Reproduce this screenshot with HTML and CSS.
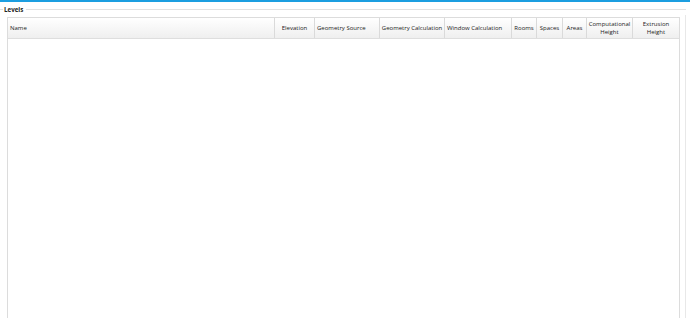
FILE: index.html
```html
<!DOCTYPE html>
<html>
<head>
<meta charset="utf-8">
<link rel="stylesheet" href="styles.css">
</head>
<body>
<div class="topbar"></div>
<div class="group">
  <div class="legend"><span class="lead"></span><span class="title">Levels</span><span class="rule"></span></div>
  <div class="frame">
    <div class="table">
      <div class="head">
        <div class="th left">Name</div>
        <div class="th">Elevation</div>
        <div class="th left">Geometry Source</div>
        <div class="th">Geometry Calculation</div>
        <div class="th left">Window Calculation</div>
        <div class="th">Rooms</div>
        <div class="th">Spaces</div>
        <div class="th">Areas</div>
        <div class="th">Computational<br>Height</div>
        <div class="th">Extrusion<br>Height</div>
      </div>
      <div class="body"></div>
    </div>
  </div>
</div>
</body>
</html>
```

FILE: styles.css
```css
html, body {
  margin: 0;
  padding: 0;
  background: #ffffff;
  font-family: "Open Sans", "Noto Sans", sans-serif;
  overflow: hidden;
}
body {
  width: 690px;
  height: 318px;
}
.topbar {
  height: 2px;
  background: #1c9ee0;
}
.group {
  padding: 0 4px 0 0;
  height: 316px;
  display: flex;
  flex-direction: column;
}
.legend {
  display: flex;
  align-items: center;
  height: 12px;
  margin-top: 1px;
}
.lead {
  width: 3px;
  height: 1px;
  background: #e2e2e2;
}
.title {
  font-size: 6.2px;
  font-weight: 700;
  color: #222;
  padding: 0 3px 0 1px;
}
.rule {
  flex: 1;
  height: 1px;
  background: #e2e2e2;
}
.frame {
  flex: 1;
  border-right: 1px solid #e8e8e8;
  padding: 2px 5px 0 7px;
  min-height: 0;
}
.table {
  border: 1px solid #dcdcdc;
  border-bottom: none;
  height: 100%;
  box-sizing: border-box;
  background: #fff;
}
.head {
  display: grid;
  grid-template-columns: 267px 40px 65px 65px 67px 25px 26px 24px 46px 1fr;
  height: 20px;
  background: linear-gradient(#ffffff, #efefef);
  border-bottom: 1px solid #dedede;
}
.th {
  display: flex;
  align-items: center;
  justify-content: center;
  text-align: center;
  white-space: nowrap;
  overflow: hidden;
  font-size: 6px;
  line-height: 8px;
  color: #222;
  border-right: 1px solid #dadada;
}
.th.left {
  justify-content: flex-start;
  padding-left: 2px;
}
.th:last-child {
  border-right: none;
}
```
